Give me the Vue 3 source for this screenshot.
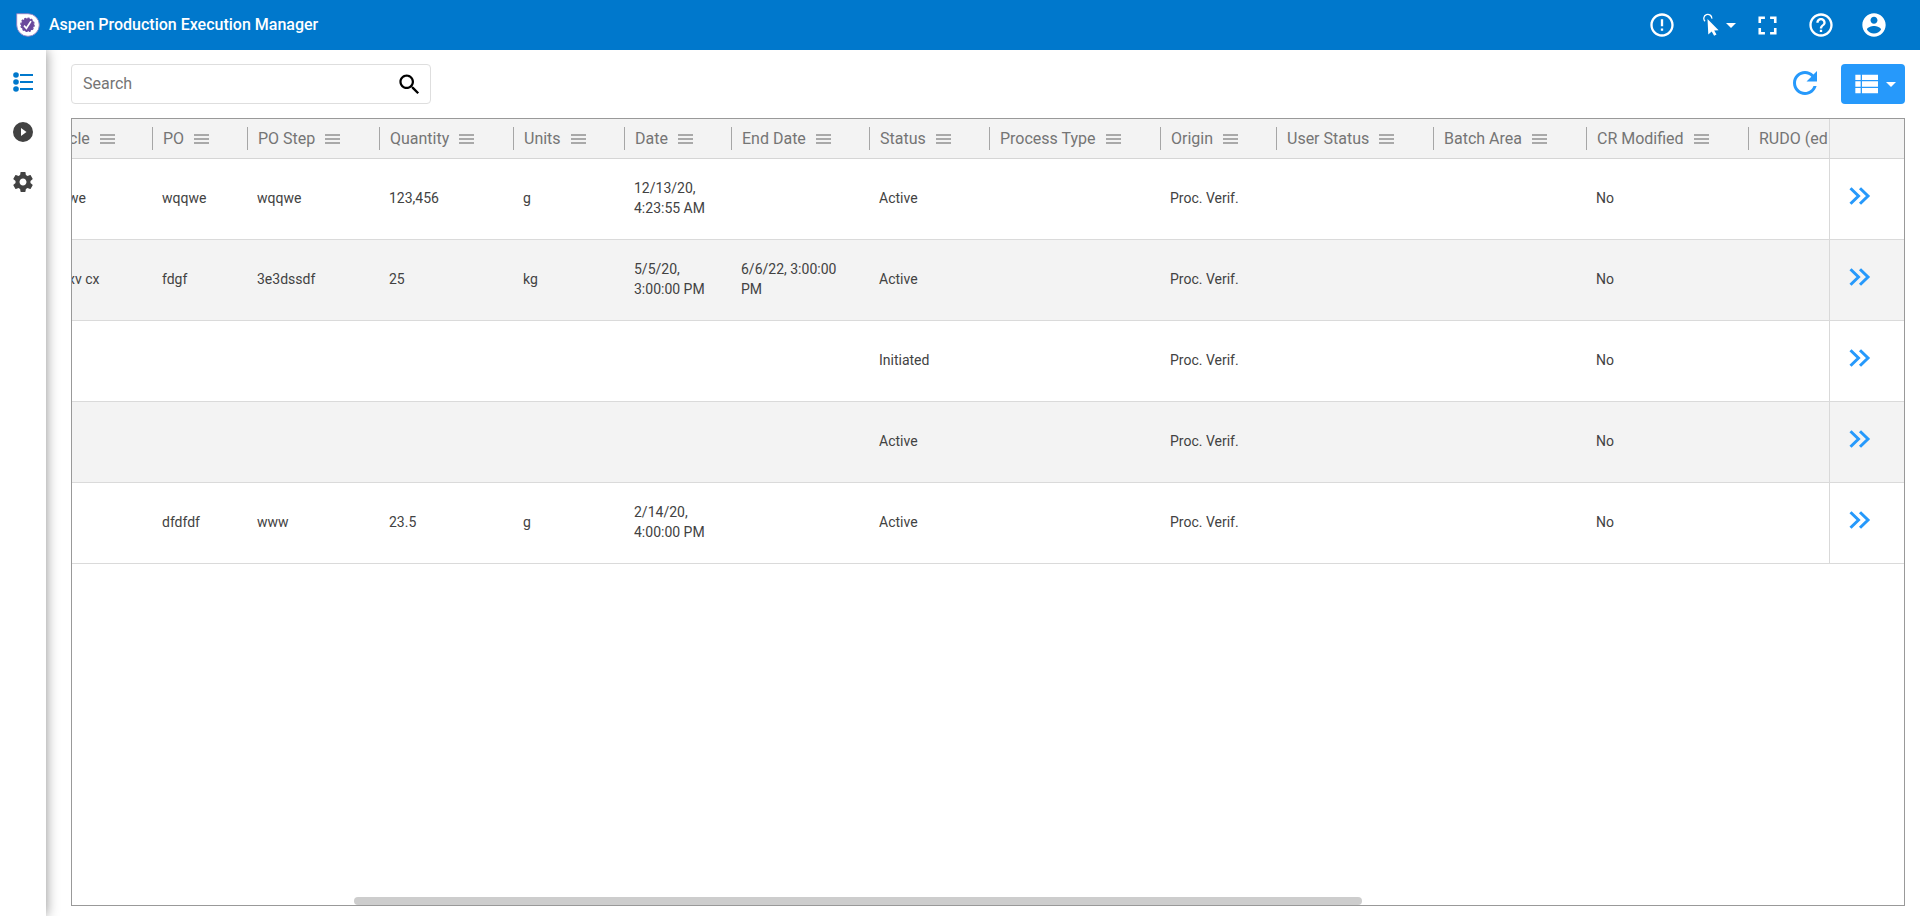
<script setup>
const columns = [
  { key: 'article', label: 'cle', width: 94 },
  { key: 'po', label: 'PO', width: 95 },
  { key: 'step', label: 'PO Step', width: 132 },
  { key: 'quantity', label: 'Quantity', width: 134 },
  { key: 'units', label: 'Units', width: 111 },
  { key: 'date', label: 'Date', width: 107 },
  { key: 'endDate', label: 'End Date', width: 138 },
  { key: 'status', label: 'Status', width: 120 },
  { key: 'processType', label: 'Process Type', width: 171 },
  { key: 'origin', label: 'Origin', width: 116 },
  { key: 'userStatus', label: 'User Status', width: 157 },
  { key: 'batchArea', label: 'Batch Area', width: 153 },
  { key: 'crModified', label: 'CR Modified', width: 162 },
  { key: 'rudo', label: 'RUDO (ed', noMenu: true }
]

const rows = [
  { article: 'we', po: 'wqqwe', step: 'wqqwe', quantity: '123,456', units: 'g', date: '12/13/20, 4:23:55 AM', status: 'Active' },
  { article: 'xv cx', po: 'fdgf', step: '3e3dssdf', quantity: '25', units: 'kg', date: '5/5/20, 3:00:00 PM', endDate: '6/6/22, 3:00:00 PM', status: 'Active' },
  { status: 'Initiated' },
  { status: 'Active' },
  { po: 'dfdfdf', step: 'www', quantity: '23.5', units: 'g', date: '2/14/20, 4:00:00 PM', status: 'Active' }
].map((row) => ({ ...row, origin: 'Proc. Verif.', crModified: 'No' }))
</script>

<template>
  <div class="app">
    <header class="topbar">
      <svg class="logo" viewBox="0 0 24 24" width="24" height="24" aria-hidden="true">
        <path d="M.7.7H12A11.3 11.3 0 1 1 .7 12z" fill="#fff" stroke="#8c7fc4" stroke-width=".9" />
        <circle cx="11.5" cy="11.8" r="6.6" fill="#6b489d" />
        <circle cx="11.5" cy="11.8" r="6.7" fill="none" stroke="#6b489d" stroke-width="1.2" stroke-dasharray="2 1.5" />
        <path d="M8 12.6l2.4 2.7 4.6-7.2" fill="none" stroke="#fff" stroke-width="1.7" />
      </svg>
      <h1>Aspen Production Execution Manager</h1>
      <nav class="tools">
        <button type="button" aria-label="Alerts">
          <svg viewBox="0 0 24 24" width="28" height="28"><path d="M11 15h2v2h-2zm0-8h2v6h-2zm.99-5C6.47 2 2 6.48 2 12s4.47 10 9.99 10C17.52 22 22 17.52 22 12S17.52 2 11.99 2zM12 20c-4.42 0-8-3.58-8-8s3.58-8 8-8 8 3.58 8 8-3.58 8-8 8z" /></svg>
        </button>
        <button type="button" class="pointer" aria-label="Pointer mode">
          <svg viewBox="0 0 16 24" width="16" height="24"><path d="M2 8.2A4 4 0 1 1 8.8 5.600" fill="none" stroke="#fff" stroke-width="1.3" /><path d="M4.500 6L15.600 17.200l-4.400.2 2.300 4.200-2.400 1.200-2.400-4.400-3.400 3z" /></svg>
          <svg viewBox="0 0 10 5" width="10" height="5"><path d="M0 0h10L5 5z" /></svg>
        </button>
        <button type="button" aria-label="Full screen">
          <svg viewBox="0 0 24 24" width="31" height="31"><path d="M7 14H5v5h5v-2H7v-3zm-2-4h2V7h3V5H5v5zm12 7h-3v2h5v-5h-2v3zM14 5v2h3v3h2V5h-5z" /></svg>
        </button>
        <button type="button" aria-label="Help">
          <svg viewBox="0 0 24 24" width="28" height="28"><path d="M11 18h2v-2h-2v2zm1-16C6.48 2 2 6.48 2 12s4.48 10 10 10 10-4.48 10-10S17.52 2 12 2zm0 18c-4.41 0-8-3.59-8-8s3.59-8 8-8 8 3.59 8 8-3.59 8-8 8zm0-14c-2.21 0-4 1.79-4 4h2c0-1.1.9-2 2-2s2 .9 2 2c0 2-3 1.75-3 5h2c0-2.25 3-2.5 3-5 0-2.21-1.79-4-4-4z" /></svg>
        </button>
        <button type="button" aria-label="Account">
          <svg viewBox="0 0 24 24" width="28" height="28"><path d="M12 2C6.48 2 2 6.48 2 12s4.48 10 10 10 10-4.48 10-10S17.52 2 12 2zm0 3c1.66 0 3 1.34 3 3s-1.34 3-3 3-3-1.34-3-3 1.34-3 3-3zm0 14.2c-2.5 0-4.71-1.28-6-3.22.03-1.99 4-3.08 6-3.08 1.99 0 5.97 1.09 6 3.08-1.29 1.94-3.5 3.22-6 3.22z" /></svg>
        </button>
      </nav>
    </header>

    <div class="body">
      <aside class="sidebar">
        <button type="button" class="active" aria-label="Orders">
          <svg viewBox="0 0 20 20" width="20" height="20"><circle cx="3" cy="3" r="2.8" /><circle cx="3" cy="10" r="2.8" /><circle cx="3" cy="17" r="2.8" /><path d="M7 2h13v2H7zM7 9h13v2H7zM7 16h13v2H7z" /></svg>
        </button>
        <button type="button" aria-label="Execution">
          <svg viewBox="0 0 20 20" width="20" height="20"><path d="M10 0a10 10 0 1 0 0 20 10 10 0 0 0 0-20zM8 14V6l5.500 4z" /></svg>
        </button>
        <button type="button" aria-label="Settings">
          <svg viewBox="0 0 24 24" width="24" height="24"><path d="M19.43 12.980c.04-.32.07-.64.07-.98s-.03-.66-.07-.98l2.110-1.650c.19-.15.24-.42.12-.64l-2-3.460c-.12-.22-.39-.3-.61-.22l-2.490 1c-.52-.4-1.080-.73-1.690-.98l-.38-2.650C14.460 2.180 14.250 2 14 2h-4c-.25 0-.46.18-.49.42l-.38 2.650c-.61.25-1.170.59-1.690.98l-2.490-1c-.23-.09-.49 0-.61.22l-2 3.460c-.13.22-.07.49.12.64l2.110 1.650c-.04.32-.07.65-.07.98s.03.66.07.98l-2.110 1.650c-.19.15-.24.42-.12.64l2 3.460c.12.22.39.3.61.22l2.490-1c.52.4 1.080.73 1.690.98l.38 2.650c.03.24.24.42.49.42h4c.25 0 .46-.18.49-.42l.38-2.650c.61-.25 1.170-.59 1.690-.98l2.490 1c.23.09.49 0 .61-.22l2-3.460c.12-.22.07-.49-.12-.64l-2.110-1.650zM12 15.500c-1.930 0-3.500-1.570-3.500-3.500s1.570-3.500 3.500-3.500 3.500 1.570 3.500 3.500-1.570 3.500-3.500 3.500z" /></svg>
        </button>
      </aside>

      <main class="content">
        <div class="toolbar">
          <form class="search" @submit.prevent>
            <input type="text" placeholder="Search" aria-label="Search" />
            <button type="submit" aria-label="Run search">
              <svg viewBox="0 0 24 24" width="27" height="27"><path d="M15.500 14h-.79l-.28-.27C15.410 12.590 16 11.110 16 9.500 16 5.910 13.090 3 9.500 3S3 5.910 3 9.500 5.910 16 9.500 16c1.610 0 3.090-.59 4.230-1.570l.27.28v.79l5 4.990L20.490 19l-4.990-5zm-6 0C7.010 14 5 11.990 5 9.500S7.010 5 9.500 5 14 7.010 14 9.500 11.990 14 9.500 14z" /></svg>
            </button>
          </form>
          <div class="actions">
            <button type="button" class="refresh" aria-label="Refresh">
              <svg viewBox="0 0 24 24" width="36" height="36"><path d="M17.650 6.350C16.200 4.900 14.210 4 12 4c-4.420 0-7.990 3.580-7.990 8s3.570 8 7.990 8c3.730 0 6.840-2.550 7.730-6h-2.080c-.82 2.330-3.040 4-5.650 4-3.310 0-6-2.690-6-6s2.690-6 6-6c1.660 0 3.140.69 4.220 1.780L13 11h7V4l-2.350 2.350z" /></svg>
            </button>
            <button type="button" class="view" aria-label="View">
              <svg viewBox="0 0 24 24" width="32" height="32"><path d="M4 14h4v-4H4v4zm0 5h4v-4H4v4zM4 9h4V5H4v4zm5 5h12v-4H9v4zm0 5h12v-4H9v4zM9 5v4h12V5H9z" /></svg>
              <svg viewBox="0 0 10 5" width="10" height="5"><path d="M0 0h10L5 5z" /></svg>
            </button>
          </div>
        </div>

        <section class="grid">
          <table>
            <colgroup>
              <col v-for="c in columns" :key="c.key" :style="c.width ? { width: c.width + 'px' } : null" />
              <col class="open-col" />
            </colgroup>
            <thead>
              <tr>
                <th v-for="c in columns" :key="c.key" scope="col">
                  <div class="head">
                    <span>{{ c.label }}</span>
                    <svg v-if="!c.noMenu" viewBox="0 0 15 10" width="15" height="10" aria-hidden="true"><path d="M0 0h15v2H0zM0 4h15v2H0zM0 8h15v2H0z" /></svg>
                  </div>
                </th>
                <th class="open" aria-label="Open"></th>
              </tr>
            </thead>
            <tbody>
              <tr v-for="(row, i) in rows" :key="i">
                <td v-for="c in columns" :key="c.key">{{ row[c.key] }}</td>
                <td class="open">
                  <button type="button" aria-label="Open row">
                    <svg viewBox="0 0 22 18" width="22" height="18"><path d="M1.500 1.200L9.500 9l-8 7.800M11 1.200L19 9l-8 7.800" /></svg>
                  </button>
                </td>
              </tr>
            </tbody>
          </table>
          <div class="thumb"></div>
        </section>
      </main>
    </div>
  </div>
</template>

<style>
body {
  margin: 0;
}
</style>

<style scoped>
.app {
  display: flex;
  flex-direction: column;
  height: 100vh;
  font-family: Roboto, "Liberation Sans", sans-serif;
  background: #fff;
  color: #333;
  overflow: hidden;
}
* {
  box-sizing: border-box;
}
button {
  display: flex;
  align-items: center;
  justify-content: center;
  border: 0;
  padding: 0;
  background: none;
  cursor: pointer;
}
svg {
  display: block;
  flex: none;
  fill: currentColor;
}
.topbar {
  display: flex;
  align-items: center;
  height: 50px;
  flex: none;
  padding: 0 20px 0 16px;
  background: #0078cc;
  color: #fff;
  position: relative;
  z-index: 2;
}
h1 {
  margin: 0 0 0 9px;
  font-size: 16px;
  font-weight: 500;
  line-height: 20px;
}
.tools {
  display: flex;
  margin-left: auto;
}
.tools button {
  width: 53px;
  height: 50px;
  color: #fff;
}
.tools .pointer {
  gap: 7px;
  padding-left: 9px;
}
.body {
  display: flex;
  flex: 1;
  min-height: 0;
}
.sidebar {
  width: 46px;
  flex: none;
  padding-top: 7px;
  background: #fff;
  box-shadow: 0 0 12px rgba(0, 0, 0, 0.45);
}
.sidebar button {
  width: 46px;
  height: 50px;
  color: #424242;
}
.sidebar .active {
  color: #0078cc;
}
.content {
  flex: 1;
  min-width: 0;
  display: flex;
  flex-direction: column;
  padding: 14px 15px 10px 25px;
}
.toolbar {
  display: flex;
  justify-content: space-between;
  align-items: center;
  margin-bottom: 14px;
}
.search {
  display: flex;
  align-items: center;
  width: 360px;
  height: 40px;
  border: 1px solid #dedede;
  border-radius: 4px;
  padding: 0 7px 0 11px;
}
.search input {
  flex: 1;
  min-width: 0;
  border: 0;
  outline: 0;
  padding: 0;
  font: 400 16px/20px Roboto, "Liberation Sans", sans-serif;
  color: #333;
}
.search input::placeholder {
  color: #757575;
  opacity: 1;
}
.search button {
  color: #000;
}
.actions {
  display: flex;
  align-items: center;
  gap: 18px;
}
.refresh {
  padding-bottom: 3px;
  color: #2699fb;
}
.view {
  width: 64px;
  height: 40px;
  gap: 4px;
  border-radius: 4px;
  background: #2699fb;
  color: #fff;
}
.grid {
  position: relative;
  flex: 1;
  min-height: 0;
  border: 1px solid #999;
  overflow: hidden;
}
table {
  table-layout: fixed;
  width: calc(100% + 14px);
  margin-left: -14px;
  border-collapse: separate;
  border-spacing: 0;
}
.open-col {
  width: 75px;
}
th {
  height: 40px;
  padding: 0;
  background: #f3f3f3;
  border-bottom: 1px solid #d5d5d5;
  font-size: 16px;
  font-weight: 400;
  line-height: 20px;
  color: #757575;
  text-align: left;
  white-space: nowrap;
  overflow: hidden;
}
.head {
  display: flex;
  align-items: center;
  gap: 10px;
  height: 23px;
  padding-left: 10px;
  border-left: 1px solid #a6a6a6;
}
.head svg {
  color: #a9a9a9;
}
td {
  height: 81px;
  padding: 0 20px 2px 10px;
  border-bottom: 1px solid #dadada;
  font-size: 14px;
  font-weight: 400;
  line-height: 20px;
  color: #424242;
  vertical-align: middle;
}
tbody tr:nth-child(even) td {
  background: #f3f3f3;
}
.open {
  border-left: 1px solid #d9d9d9;
}
td.open {
  padding: 0 0 6px 19px;
}
.open button {
  color: #2699fb;
}
.open path {
  fill: none;
  stroke: currentColor;
  stroke-width: 3;
}
.thumb {
  position: absolute;
  left: 15.4%;
  bottom: 0;
  width: 55%;
  height: 8px;
  border-radius: 4px;
  background: #cdcdcd;
}
</style>
